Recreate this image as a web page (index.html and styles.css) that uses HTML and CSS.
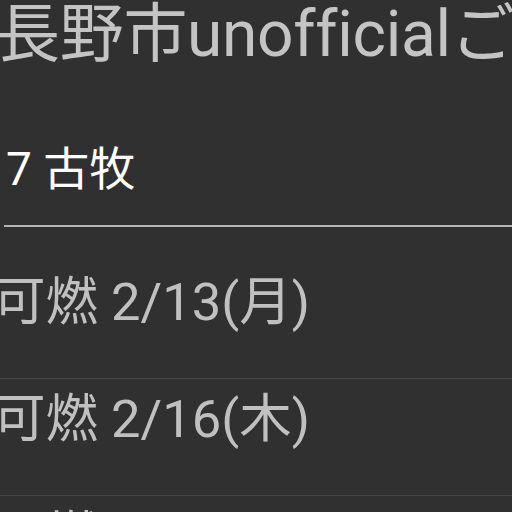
FILE: index.html
```html
<!DOCTYPE html>
<html lang="ja">
<head>
<meta charset="utf-8">
<title>長野市unofficialごみ収集日</title>
<link rel="stylesheet" href="styles.css">
</head>
<body>
<div class="screen">
  <div class="app-title">長野市unofficialごみ収集日</div>
  <div class="area-header">7 古牧</div>
  <div class="area-rule"></div>
  <ul class="schedule">
    <li class="schedule-row">可燃 2/13(月)</li>
    <li class="schedule-row">可燃 2/16(木)</li>
    <li class="schedule-row">可燃 2/20(月)</li>
  </ul>
</div>
</body>
</html>
```
FILE: styles.css
```css
html, body {
  margin: 0;
  padding: 0;
  background: #303030;
}
body {
  width: 512px;
  height: 512px;
  overflow: hidden;
  font-family: Roboto, "Noto Sans CJK JP", sans-serif;
}
.screen {
  width: 512px;
  height: 512px;
  overflow: hidden;
}
.app-title {
  font-size: 64px;
  line-height: 70px;
  color: #c4c4c4;
  white-space: nowrap;
  margin-left: -4px;
  letter-spacing: -0.3px;
}
.area-header {
  font-size: 46px;
  line-height: 54px;
  color: #ffffff;
  margin: 72px 0 0 6px;
  white-space: nowrap;
}
.area-rule {
  height: 2px;
  background: #b4b4b4;
  margin: 29px 0 0 4px;
}
.schedule {
  list-style: none;
  margin: 35px 0 0 0;
  padding: 0;
}
.schedule-row {
  font-size: 52.5px;
  line-height: 62px;
  color: #c0c0c0;
  padding: 9px 0 45px 0;
  margin-left: -7px;
  border-bottom: 1px solid #464646;
  white-space: nowrap;
}
```
